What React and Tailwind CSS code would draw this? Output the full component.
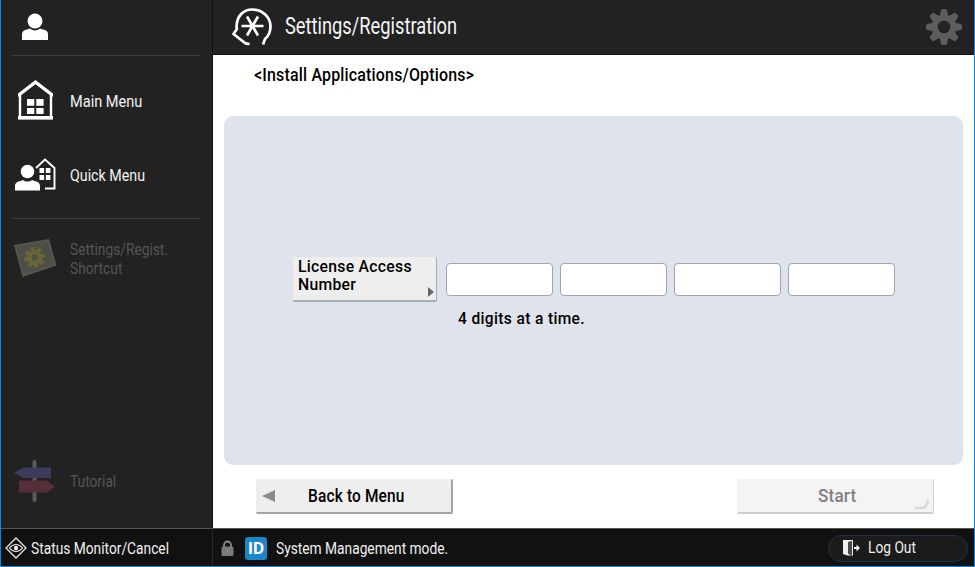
function Label({ children, className = "", sx = "scale-x-[0.86]", origin = "origin-left" }) {
  return <span className={`inline-block whitespace-nowrap ${origin} ${sx} ${className}`}>{children}</span>;
}

function UserIcon({ className = "" }) {
  return (
    <svg viewBox="0 0 26 27" className={className}>
      <circle cx="13" cy="8" r="7.500" fill="#fff" />
      <path d="M0 27v-6c0-2.500 2-4 5-4.500l3-1c1.500 1.300 3.200 2 5 2s3.500-.7 5-2l3 1c3 .5 5 2 5 4.500v6z" fill="#fff" />
    </svg>
  );
}

function HomeIcon({ className = "" }) {
  return (
    <svg viewBox="0 0 35 40" className={className}>
      <path d="M17.500 2.500 33 14.500V38H2V14.500z" fill="none" stroke="#fff" strokeWidth="2.400" />
      <path d="M17.500 0 35 13.500v3.500L17.500 4 0 17v-3.500z" fill="#fff" />
      <rect x="0" y="36" width="35" height="3.500" fill="#fff" />
      <path d="M9 20h7.300v6.800H9zM18.300 20h7.300v6.800h-7.300zM9 29h7.300v6H9zM18.300 29h7.300v6h-7.300z" fill="#fff" transform="translate(0 -1)" />
    </svg>
  );
}

function QuickIcon({ className = "" }) {
  return (
    <svg viewBox="0 0 41 34" className={className}>
      <path d="M21 11 30 2.500 39.500 11v20.500H30" fill="none" stroke="#fff" strokeWidth="1.900" />
      <path d="M24.500 11h4.600v5h-4.600zM30.800 11h4.600v5h-4.600zM24.500 18h4.600v5h-4.600zM30.800 18h4.600v5h-4.600z" fill="#fff" />
      <circle cx="12.500" cy="14.500" r="6.800" fill="#fff" />
      <path d="M0 33.500V29c0-3 2.500-4.500 5.500-5l2.500-1c1.500 1 2.800 1.500 4.500 1.500S15.500 24 17 23l2.500 1c3 .5 5.500 2 5.500 5v4.500z" fill="#fff" />
    </svg>
  );
}

function ShortcutIcon({ className = "" }) {
  const teeth = [0, 45, 90, 135];
  return (
    <svg viewBox="0 0 44 40" className={className}>
      <path d="M1 7 36 1l7.500 26.500L9.500 39z" fill="#55564f" />
      <path d="M3.500 8.500 34.500 3.500 41 26.500 11 36z" fill="#4d4f47" />
      {teeth.map((a) => (
        <rect key={a} x="19.500" y="9" width="4" height="21" fill="#6a6439" transform={`rotate(${a - 12} 21.500 19.500)`} />
      ))}
      <circle cx="21.500" cy="19.500" r="7.500" fill="#6a6439" />
      <circle cx="21.500" cy="19.500" r="3" fill="#4d4f47" />
    </svg>
  );
}

function SignIcon({ className = "" }) {
  return (
    <svg viewBox="0 0 44 42" className={className}>
      <rect x="19.500" y="0" width="4" height="42" rx="2" fill="#595959" />
      <path d="M1 13 10 7.500h28v10.500H10z" fill="#3b3b5c" />
      <path d="M6 20.500h28L42 26.500l-8 6H6z" fill="#552f37" />
    </svg>
  );
}

function StarLogo({ className = "" }) {
  return (
    <svg viewBox="0 0 40 38" className={className} fill="none" stroke="#fff">
      <path d="M31 36.500 33 31C37 27.500 38.500 23 38.500 18.500 38.500 9 30.500 1.500 20.500 1.500S5 8.500 4.500 18.500c0 1 .2 2 .4 2.500L1.500 26 13 35c1.500.8 3 1 4.500.7" strokeWidth="2.700" strokeLinejoin="round" />
      <path d="M9.500 18h22M15 8.500l11 19M26 8.500l-11 19" strokeWidth="2.600" />
    </svg>
  );
}

function GearIcon({ className = "" }) {
  const teeth = [0, 45, 90, 135, 180, 225, 270, 315];
  return (
    <svg viewBox="0 0 36 36" className={className}>
      {teeth.map((a) => (
        <path key={a} d="M13.500 8 15 1.500c.2-.8.8-1.500 1.500-1.500h3c.7 0 1.300.7 1.500 1.500L22.500 8z" fill="#5d5d5d" transform={`rotate(${a} 18 18)`} />
      ))}
      <circle cx="18" cy="18" r="12.500" fill="#5d5d5d" />
      <circle cx="18" cy="18" r="6.300" fill="#222222" />
    </svg>
  );
}

function EyeDiamond({ className = "" }) {
  return (
    <svg viewBox="0 0 22 22" className={className} fill="none" stroke="#e8e8e8">
      <path d="M11 1 21 11 11 21 1 11z" strokeWidth="1.300" />
      <path d="M4.500 11c2-2.500 4-3.500 6.500-3.500s4.500 1 6.500 3.500c-2 2.500-4 3.500-6.500 3.500S6.500 13.500 4.500 11z" strokeWidth="1.200" />
      <circle cx="11" cy="11" r="2.200" fill="#e8e8e8" stroke="none" />
    </svg>
  );
}

function LockIcon({ className = "" }) {
  return (
    <svg viewBox="0 0 13 16" className={className}>
      <path d="M3 7.500V5a3.500 3.500 0 0 1 7 0v2.500" fill="none" stroke="#8c8c8c" strokeWidth="1.800" />
      <rect x="0.500" y="6.500" width="12" height="9.500" rx="1.500" fill="#7a7a7a" />
      <rect x="6" y="10" width="1" height="3" fill="#999" />
    </svg>
  );
}

function DoorIcon({ className = "" }) {
  return (
    <svg viewBox="0 0 17 16" className={className}>
      <path d="M0 0h10v15.500H4.500L0 14z" fill="#f0f0f0" />
      <path d="M5 2 9 .7v15l-4-2z" fill="#4a4a4a" />
      <path d="M11 7h2.500V4.500L17 8l-3.500 3.500V9H11z" fill="#f0f0f0" />
    </svg>
  );
}

function Field() {
  return <div className="h-[33px] w-[107px] rounded-[4px] border-[1.500px] border-[#9ea4b2] bg-white" />;
}

function NavRow({ icon, text, className = "", dim = false, sx = "scale-x-[0.86]", labelClass = "" }) {
  return (
    <div className={`flex items-center ${className}`}>
      <div className="flex w-[69px] shrink-0 justify-center pr-[1px]">{icon}</div>
      <Label sx={sx} className={`text-[16px] leading-[19px] ${dim ? "text-[#555555]" : "text-[#f2f2f2]"} ${labelClass}`}>{text}</Label>
    </div>
  );
}

export default function App() {
  return (
    <div className="flex h-[567px] w-[975px] flex-col overflow-hidden border-x border-b border-[#1583d8] bg-[#222222] font-['Roboto','Liberation_Sans',sans-serif]">
      <div className="flex min-h-0 flex-1">
        <aside className="flex w-[212px] shrink-0 flex-col border-r border-[#111111] bg-[#222222] pb-[26px]">
          <div className="mx-[11px] flex h-[56px] items-start border-b border-[#3c3c3c] pl-[10px] pt-[13px]">
            <UserIcon className="h-[27px] w-[26px]" />
          </div>
          <NavRow className="mt-[24px] h-[40px]" labelClass="pt-[2px]" sx="scale-x-[0.91]" icon={<HomeIcon className="h-[40px] w-[35px]" />} text="Main Menu" />
          <NavRow className="mt-[37px] h-[34px]" labelClass="pt-[2px]" sx="scale-x-[0.89]" icon={<QuickIcon className="h-[34px] w-[41px]" />} text="Quick Menu" />
          <div className="mx-[11px] mt-[27px] border-t border-[#3c3c3c]" />
          <NavRow
            className="mt-[19px] h-[40px]"
            labelClass="pt-[2px]"
            icon={<ShortcutIcon className="h-[40px] w-[44px]" />}
            text={<>Settings/Regist.<br />Shortcut</>}
            dim
          />
          <NavRow className="mt-auto h-[42px]" icon={<SignIcon className="h-[42px] w-[44px]" />} text="Tutorial" dim />
        </aside>

        <main className="flex min-w-0 flex-1 flex-col bg-white">
          <header className="flex h-[55px] shrink-0 items-center border-b border-[#111111] bg-[#222222] pl-[19px] pr-[12px]">
            <StarLogo className="h-[38px] w-[40px]" />
            <Label className="ml-[13px] text-[23px] leading-[28px] text-[#f4f4f4]" sx="scale-x-[0.795]">Settings/Registration</Label>
            <GearIcon className="ml-auto h-[36px] w-[36px]" />
          </header>

          <div className="flex h-[61px] shrink-0 items-start pl-[41px] pt-[9px]">
            <Label className="text-[18px] font-medium leading-[22px] tracking-[0.2px] text-black" sx="scale-x-[0.887]">{"<Install Applications/Options>"}</Label>
          </div>

          <section className="mx-[11px] h-[349px] shrink-0 rounded-[9px] bg-[#dfe3ec] pl-[69px] pt-[141px]">
            <div className="flex">
              <div className="relative h-[45px] w-[144px] rounded-[2px] border-b-2 border-r border-[#a9adb5] bg-[#eeeeee] pl-[5px] pt-[1px]">
                <Label className="text-[16.500px] font-medium leading-[18px] tracking-[0.3px] text-black" sx="scale-x-[0.953]">License Access<br />Number</Label>
                <div className="absolute bottom-[3px] right-[2px] h-0 w-0 border-y-[5px] border-l-[6px] border-y-transparent border-l-[#666666]" />
              </div>
              <div className="ml-[9px] pt-[6px]">
                <div className="flex gap-[7px]">
                  <Field /><Field /><Field /><Field />
                </div>
                <div className="mt-[11px] pl-[12px]">
                  <Label className="block text-[17px] font-medium leading-[20px] tracking-[0.4px] text-black" sx="scale-x-[0.913]">4 digits at a time.</Label>
                </div>
              </div>
            </div>
          </section>

          <div className="flex flex-1 items-start justify-between pl-[43px] pr-[40px] pt-[14px]">
            <button className="relative flex h-[35px] w-[197px] items-center justify-center rounded-[2px] border-b-2 border-r-2 border-[#a3a3a3] bg-[#eeeeee] pl-[5px]">
              <div className="absolute left-[6px] h-0 w-0 border-y-[6px] border-r-[13px] border-y-transparent border-r-[#8a8a8a]" />
              <Label origin="origin-center" className="text-[18px] font-medium leading-[21px] tracking-[0.2px] text-black" sx="scale-x-[0.857]">Back to Menu</Label>
            </button>
            <button className="relative flex h-[35px] w-[197px] items-center justify-center rounded-[2px] border-b-2 border-r border-[#cfcfcf] bg-[#f4f4f4] pl-[4px]">
              <Label origin="origin-center" className="text-[18px] font-medium leading-[21px] tracking-[0.2px] text-[#808080]" sx="scale-x-[0.95]">Start</Label>
              <svg viewBox="0 0 16 14" className="absolute bottom-[2px] right-[3px] h-[14px] w-[16px]" fill="none">
                <path d="M1 12h7c3 0 5-2 6-8" stroke="#d9d9d9" strokeWidth="2.500" />
              </svg>
            </button>
          </div>
        </main>
      </div>

      <footer className="flex h-[38px] shrink-0 border-t border-[#555555] bg-[#111111] pt-[1px]">
        <div className="flex w-[212px] shrink-0 items-center border-r border-[#2a2a2a] pl-[4px]">
          <EyeDiamond className="h-[22px] w-[22px]" />
          <Label className="ml-[4px] pt-[2px] text-[16px] leading-[20px] text-[#f0f0f0]">Status Monitor/Cancel</Label>
        </div>
        <div className="flex flex-1 items-center pl-[8px]">
          <LockIcon className="h-[16px] w-[13px]" />
          <div className="ml-[11px] flex h-[23px] w-[22px] items-center justify-center rounded-[3px] bg-[#1b87c9] text-[17px] font-bold leading-none text-white">ID</div>
          <Label className="ml-[9px] pt-[2px] text-[16px] leading-[20px] text-[#f0f0f0]">System Management mode.</Label>
          <div className="ml-auto mr-[6px] flex h-[27px] w-[140px] items-center rounded-full border border-[#14364f] bg-[#1b1b1b] pl-[14px]">
            <DoorIcon className="h-[16px] w-[17px]" />
            <Label className="ml-[8px] text-[16px] leading-[20px] text-[#f0f0f0]">Log Out</Label>
          </div>
        </div>
      </footer>
    </div>
  );
}
